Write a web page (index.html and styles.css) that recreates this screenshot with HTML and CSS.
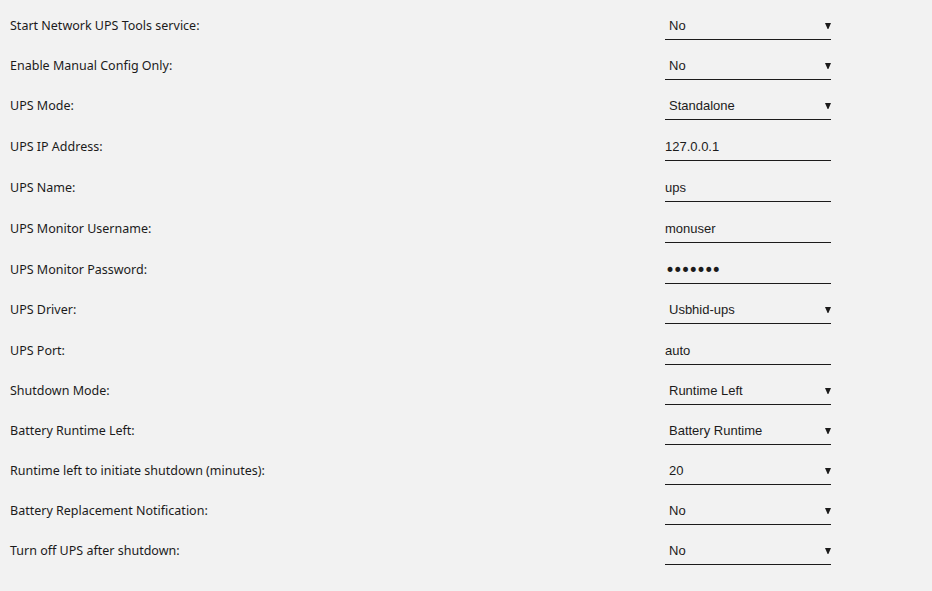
FILE: index.html
```html
<!DOCTYPE html>
<html lang="en">
<head>
<meta charset="utf-8">
<title>Network UPS Tools Settings</title>
<link rel="stylesheet" href="styles.css">
</head>
<body>
<form class="settings">
  <div class="row">
    <label class="label" for="start">Start Network UPS Tools service:</label>
    <select class="ctl pick" id="start"><option>No</option><option>Yes</option></select>
  </div>
  <div class="row">
    <label class="label" for="manual">Enable Manual Config Only:</label>
    <select class="ctl pick" id="manual"><option>No</option><option>Yes</option></select>
  </div>
  <div class="row">
    <label class="label" for="mode">UPS Mode:</label>
    <select class="ctl pick" id="mode"><option>Standalone</option><option>Netserver</option><option>Netclient</option></select>
  </div>
  <div class="row text-row">
    <label class="label" for="ip">UPS IP Address:</label>
    <input class="ctl field" id="ip" type="text" value="127.0.0.1">
  </div>
  <div class="row text-row">
    <label class="label" for="name">UPS Name:</label>
    <input class="ctl field" id="name" type="text" value="ups">
  </div>
  <div class="row text-row">
    <label class="label" for="user">UPS Monitor Username:</label>
    <input class="ctl field" id="user" type="text" value="monuser">
  </div>
  <div class="row text-row">
    <label class="label" for="pass">UPS Monitor Password:</label>
    <input class="ctl field secret" id="pass" type="password" value="1234567">
  </div>
  <div class="row">
    <label class="label" for="driver">UPS Driver:</label>
    <select class="ctl pick" id="driver"><option>Usbhid-ups</option></select>
  </div>
  <div class="row text-row">
    <label class="label" for="port">UPS Port:</label>
    <input class="ctl field" id="port" type="text" value="auto">
  </div>
  <div class="row">
    <label class="label" for="sdmode">Shutdown Mode:</label>
    <select class="ctl pick" id="sdmode"><option>Runtime Left</option></select>
  </div>
  <div class="row">
    <label class="label" for="battery">Battery Runtime Left:</label>
    <select class="ctl pick" id="battery"><option>Battery Runtime</option></select>
  </div>
  <div class="row">
    <label class="label" for="minutes">Runtime left to initiate shutdown (minutes):</label>
    <select class="ctl pick" id="minutes"><option>20</option></select>
  </div>
  <div class="row">
    <label class="label" for="notify">Battery Replacement Notification:</label>
    <select class="ctl pick" id="notify"><option>No</option><option>Yes</option></select>
  </div>
  <div class="row">
    <label class="label" for="off">Turn off UPS after shutdown:</label>
    <select class="ctl pick" id="off"><option>No</option><option>Yes</option></select>
  </div>
</form>
</body>
</html>
```

FILE: styles.css
```css
html, body {
  margin: 0;
  padding: 0;
  background: #f2f2f2;
}

body {
  font-family: "Noto Sans", "Liberation Sans", sans-serif;
  font-size: 12.5px;
  color: #1c1b1b;
}

.settings {
  display: flex;
  flex-direction: column;
}

.row {
  display: flex;
  align-items: flex-start;
}

.label {
  flex: 0 0 665px;
  box-sizing: border-box;
  padding: 17px 0 0 10px;
}

.text-row .label {
  padding-top: 18px;
}

.ctl {
  box-sizing: border-box;
  width: 166px;
  margin: 10px 0 0 0;
  border: 0;
  border-bottom: 1px solid #1c1b1b;
  border-radius: 0;
  background-color: transparent;
  font-family: "Liberation Sans", Arial, sans-serif;
  font-size: 13px;
  color: #1c1b1b;
  outline: none;
}

/* drop-down with a small filled arrow at the right edge */
.pick {
  -webkit-appearance: none;
  appearance: none;
  height: 30px;
  padding: 2px 12px 0 4px;
  background-image: url("data:image/svg+xml,%3Csvg xmlns='http://www.w3.org/2000/svg' width='6' height='6'%3E%3Cpath d='M0 0H6L3.4 6H2.6Z' fill='%231c1b1b'/%3E%3C/svg%3E");
  background-repeat: no-repeat;
  background-position: right 0 top 13px;
}

.field {
  height: 31px;
  padding: 2px 0 0 0;
}

/* larger, round masking dots on the password field */
.secret {
  font-family: "DejaVu Sans", sans-serif;
  font-size: 17px;
  letter-spacing: -2.3px;
  padding-top: 3px;
}
```
